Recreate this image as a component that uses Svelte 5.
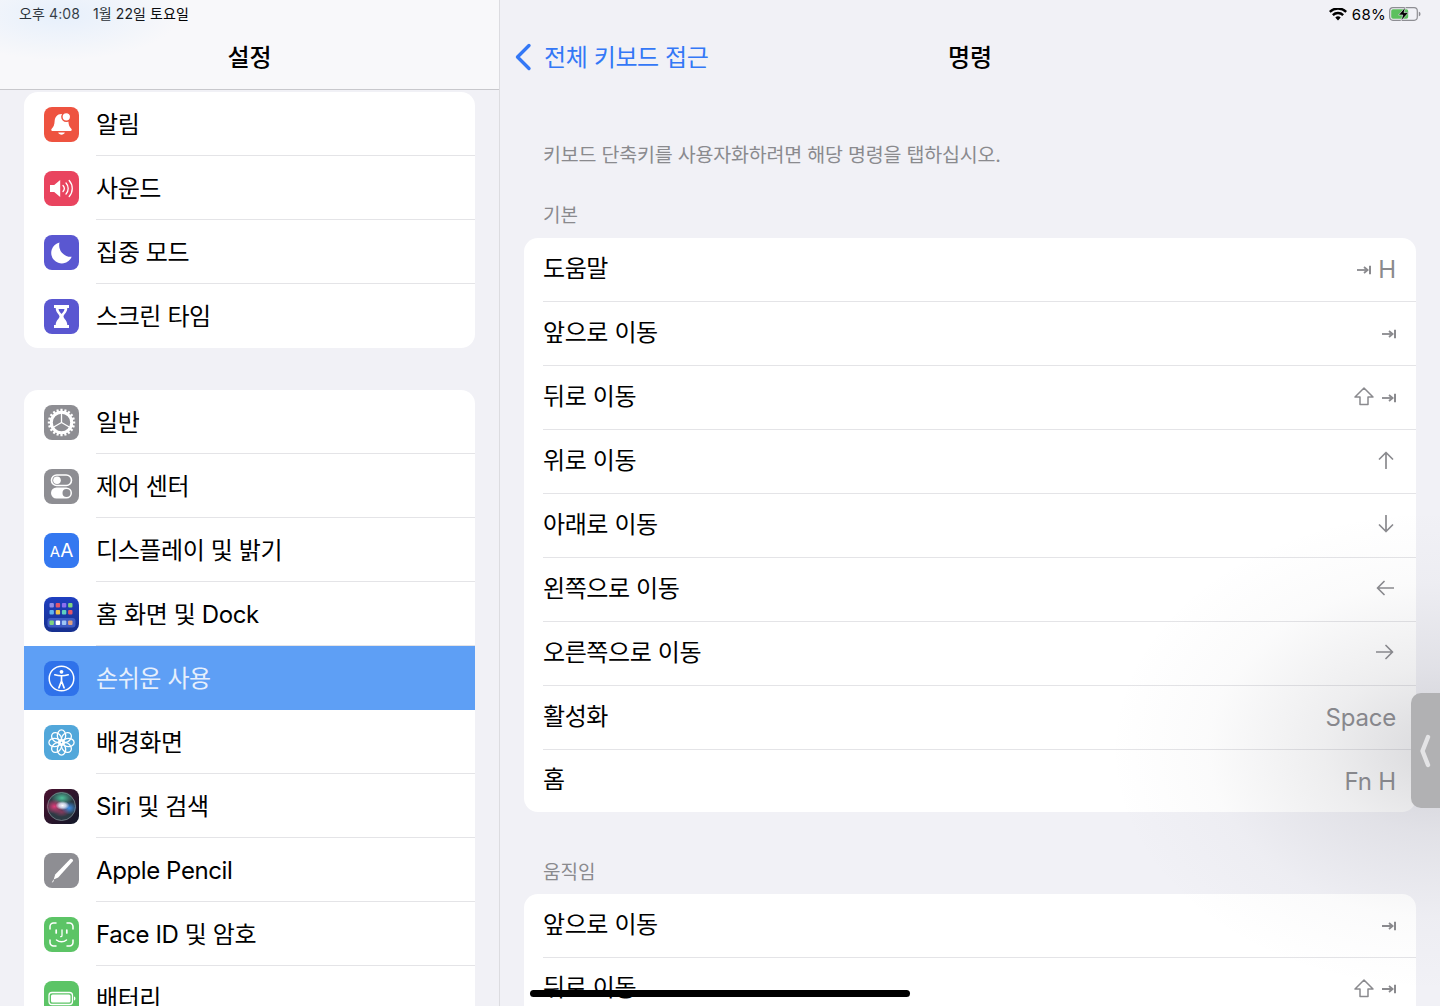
<script>
  const groupA = [
    { label: "알림", icon: "bell" },
    { label: "사운드", icon: "sound" },
    { label: "집중 모드", icon: "moon" },
    { label: "스크린 타임", icon: "hourglass" }
  ];
  const groupB = [
    { label: "일반", icon: "gear" },
    { label: "제어 센터", icon: "toggles" },
    { label: "디스플레이 및 밝기", icon: "aa" },
    { label: "홈 화면 및 Dock", icon: "home" },
    { label: "손쉬운 사용", icon: "access", active: true },
    { label: "배경화면", icon: "flower" },
    { label: "Siri 및 검색", icon: "siri" },
    { label: "Apple Pencil", icon: "pencil" },
    { label: "Face ID 및 암호", icon: "face" },
    { label: "배터리", icon: "battery" }
  ];
  const basics = [
    { label: "도움말", keys: ["tab", "H"] },
    { label: "앞으로 이동", keys: ["tab"] },
    { label: "뒤로 이동", keys: ["shift", "tab"] },
    { label: "위로 이동", keys: ["up"] },
    { label: "아래로 이동", keys: ["down"] },
    { label: "왼쪽으로 이동", keys: ["left"] },
    { label: "오른쪽으로 이동", keys: ["right"] },
    { label: "활성화", keys: ["Space"] },
    { label: "홈", keys: ["Fn H"] }
  ];
  const moves = [
    { label: "앞으로 이동", keys: ["tab"] },
    { label: "뒤로 이동", keys: ["shift", "tab"] }
  ];
  const petals = [0, 45, 90, 135, 180, 225, 270, 315];
  const gearTeeth = Array.from({ length: 20 }, (_, i) => i * 18);
  const dockDots = [
    "#8e8ee8", "#e2566a", "#8b6ff0", "#7fd37f",
    "#5fb4f0", "#f0c14b", "#5fd0c0", "#e2566a"
  ];
  const trayDots = ["#7fd37f", "#ffffff", "#9ec6f5", "#e0a080"];
</script>

{#snippet appIcon(name)}
  <span class="app-icon {name}">
    <svg viewBox="0 0 35 35" width="35" height="35">
      {#if name === "bell"}
        <path d="M17.500 7c-4.400 0-6.700 3.200-6.900 7.500-.2 3.400-1 5.400-2.900 7.300-.9.900-.4 2.200.8 2.200h18c1.200 0 1.700-1.300.8-2.200-1.900-1.900-2.700-3.900-2.900-7.300C24.200 10.200 21.900 7 17.500 7z" fill="#fff" />
        <path d="M14.200 25.600h6.600c-.5 1.300-1.800 2.100-3.300 2.100s-2.800-.8-3.300-2.100z" fill="#fff" />
        <circle cx="22.300" cy="9.800" r="4.400" fill="#fff" stroke="#ee5340" stroke-width="1.500" />
      {:else if name === "sound"}
        <path d="M6 14h4.200l6-5v17l-6-5H6z" fill="#fff" />
        <path d="M19 14.500a4.500 4.500 0 0 1 0 6M22 12a8 8 0 0 1 0 11M25.200 9.500a12 12 0 0 1 0 16" fill="none" stroke="#fff" stroke-width="1.300" stroke-linecap="round" />
      {:else if name === "moon"}
        <path d="M15.500 7.500A10.600 10.600 0 1 0 27.700 21.700 11.500 11.500 0 0 1 15.500 7.500z" fill="#fff" />
      {:else if name === "hourglass"}
        <path d="M10 6h15v3h-1.700c0 5-3.800 6.200-3.800 8.500s3.800 3.500 3.800 8.500H25v3H10v-3h1.700c0-5 3.800-6.200 3.800-8.500S11.700 14 11.700 9H10z" fill="#fff" />
        <path d="M14.500 10h6c-.4 2.500-2 3.600-3 5-1-1.400-2.600-2.500-3-5z" fill="#5a57d1" />
      {:else if name === "gear"}
        <g fill="none" stroke="#fff">
          {#each gearTeeth as a}
            <line x1="17.500" y1="3.800" x2="17.500" y2="7.500" stroke-width="2.200" transform="rotate({a} 17.500 17.500)" />
          {/each}
          <circle cx="17.500" cy="17.500" r="10.200" stroke-width="3" />
          <path d="M17.500 17.500V8M17.500 17.500 9.300 22.300M17.500 17.500l8.200 4.800" stroke-width="1.300" />
        </g>
      {:else if name === "toggles"}
        <rect x="7.500" y="6" width="20" height="10.500" rx="5.250" fill="none" stroke="#fff" stroke-width="1.600" />
        <circle cx="13" cy="11.250" r="3.800" fill="#fff" />
        <rect x="7" y="18.500" width="21" height="11" rx="5.500" fill="#fff" />
        <circle cx="22.500" cy="24" r="4" fill="#8e8e93" />
      {:else if name === "aa"}
        <text x="17.500" y="24" text-anchor="middle" class="aa-text"><tspan font-size="15">A</tspan><tspan font-size="19">A</tspan></text>
      {:else if name === "home"}
        {#each dockDots as c, i}
          <rect x={5.500 + (i % 4) * 6.200} y={i < 4 ? 6 : 13} width="4.400" height="4.400" rx="1" fill={c} />
        {/each}
        <rect x="3.500" y="21" width="28" height="9.500" rx="3" fill="#3e5cc4" />
        {#each trayDots as c, i}
          <rect x={5.500 + i * 6.200} y="23.500" width="4.400" height="4.400" rx="1" fill={c} />
        {/each}
      {:else if name === "access"}
        <circle cx="17.500" cy="17.500" r="12.300" fill="none" stroke="#fff" stroke-width="1.500" />
        <circle cx="17.500" cy="10.800" r="1.900" fill="#fff" />
        <path d="M10.800 13.800c4.500 1.300 8.900 1.300 13.400 0M17.500 15v5.500M17.500 20l-2.600 6.800M17.500 20l2.600 6.800" fill="none" stroke="#fff" stroke-width="1.700" stroke-linecap="round" />
      {:else if name === "flower"}
        {#each petals as a}
          <ellipse cx="17.500" cy="10.500" rx="4.200" ry="5.600" fill="none" stroke="#fff" stroke-width="1.300" transform="rotate({a} 17.500 17.500)" />
        {/each}
        <circle cx="17.500" cy="17.500" r="2.800" fill="none" stroke="#fff" stroke-width="1.300" />
      {:else if name === "siri"}
        <defs>
          <radialGradient id="siri-core">
            <stop offset="0" stop-color="#fff" />
            <stop offset=".5" stop-color="#e8ecff" stop-opacity=".8" />
            <stop offset="1" stop-color="#e8ecff" stop-opacity="0" />
          </radialGradient>
          <radialGradient id="siri-pink">
            <stop offset="0" stop-color="#e03a78" />
            <stop offset="1" stop-color="#e03a78" stop-opacity="0" />
          </radialGradient>
          <radialGradient id="siri-blue">
            <stop offset="0" stop-color="#3f8fe8" />
            <stop offset="1" stop-color="#3f8fe8" stop-opacity="0" />
          </radialGradient>
          <radialGradient id="siri-green">
            <stop offset="0" stop-color="#4fc09a" />
            <stop offset="1" stop-color="#4fc09a" stop-opacity="0" />
          </radialGradient>
        </defs>
        <circle cx="17.500" cy="17.500" r="14" fill="#2c3a44" stroke="#7d8a90" stroke-width=".8" />
        <ellipse cx="18" cy="9" rx="11" ry="7" fill="url(#siri-green)" />
        <ellipse cx="10.500" cy="17.500" rx="9" ry="7.500" fill="url(#siri-pink)" />
        <ellipse cx="25" cy="19" rx="8" ry="6.500" fill="url(#siri-blue)" />
        <ellipse cx="17.500" cy="23" rx="8" ry="5" fill="url(#siri-pink)" opacity=".5" />
        <ellipse cx="18.500" cy="16.500" rx="7" ry="4.500" fill="url(#siri-core)" />
      {:else if name === "pencil"}
        <path d="M26.500 5.800c1.200-.6 3 .9 2.500 2.300L14.200 24.600 9.700 26.400l1.500-4.800z" fill="#fff" />
        <path d="M9.200 27l.8-.6-.6 2.300-1.700 1.100z" fill="#fff" />
      {:else if name === "face"}
        <path d="M6 12V9.500A3.500 3.500 0 0 1 9.500 6H12M23 6h2.500A3.500 3.500 0 0 1 29 9.500V12M29 23v2.500a3.500 3.500 0 0 1-3.500 3.500H23M12 29H9.500A3.500 3.500 0 0 1 6 25.500V23" fill="none" stroke="#fff" stroke-width="1.500" stroke-linecap="round" />
        <path d="M12.200 13v3M22.800 13v3" stroke="#fff" stroke-width="1.700" stroke-linecap="round" />
        <path d="M18 13v5.500c0 .8-.5 1.200-1.300 1.200" fill="none" stroke="#fff" stroke-width="1.300" stroke-linecap="round" />
        <path d="M12.500 23c2.800 2.400 7.200 2.400 10 0" fill="none" stroke="#fff" stroke-width="1.500" stroke-linecap="round" />
      {:else if name === "battery"}
        <rect x="5" y="11.500" width="23.500" height="12" rx="3" fill="none" stroke="#fff" stroke-width="1.300" />
        <rect x="7" y="13.500" width="19.500" height="8" rx="1.500" fill="#fff" />
        <path d="M30 15.500c1 .4 1.400 1 1.400 2s-.4 1.600-1.400 2z" fill="#fff" />
      {/if}
    </svg>
  </span>
{/snippet}

{#snippet settingsRow(row)}
  <div class="s-row" class:active={row.active}>
    {@render appIcon(row.icon)}
    <div class="s-label">{row.label}</div>
  </div>
{/snippet}

{#snippet keyGlyph(k)}
  {#if k === "tab"}
    <svg class="glyph tab" viewBox="0 0 14 10" width="14" height="10">
      <path d="M0 5h10.500" fill="none" stroke="#8a8a8e" stroke-width="1.800" />
      <path d="M7 2 10.600 5 7 8" fill="none" stroke="#8a8a8e" stroke-width="1.800" />
      <path d="M13 .8v8.400" fill="none" stroke="#8a8a8e" stroke-width="2" />
    </svg>
  {:else if k === "shift"}
    <svg class="glyph shift" viewBox="0 0 20 19" width="20" height="19">
      <path d="M10 1 1 10h5v7.500h8V10h5z" fill="none" stroke="#8a8a8e" stroke-width="1.500" stroke-linejoin="round" />
    </svg>
  {:else if k === "up" || k === "down" || k === "left" || k === "right"}
    <svg class="glyph arrow {k}" viewBox="0 0 18 18" width="18" height="18">
      <path d="M9 1.500v16M2.500 8 9 1.500 15.500 8" fill="none" stroke="#8a8a8e" stroke-width="1.700" stroke-linecap="round" stroke-linejoin="round" />
    </svg>
  {:else}
    <span class="key-text">{k}</span>
  {/if}
{/snippet}

{#snippet commandRow(row)}
  <div class="c-row">
    <div class="c-inner">
      <span class="c-label">{row.label}</span>
      <span class="keys">
        {#each row.keys as k}
          {@render keyGlyph(k)}
        {/each}
      </span>
    </div>
  </div>
{/snippet}

<div class="ipad">
  <aside class="sidebar">
    <header class="side-head">
      <div class="status-left">
        <span>오후 4:08</span>
        <span>1월 22일 토요일</span>
      </div>
      <h1 class="side-title">설정</h1>
    </header>
    <div class="side-scroll">
      <section class="card first">
        {#each groupA as row}
          {@render settingsRow(row)}
        {/each}
      </section>
      <section class="card">
        {#each groupB as row}
          {@render settingsRow(row)}
        {/each}
      </section>
    </div>
  </aside>

  <main class="detail">
    <div class="status-right">
      <svg viewBox="0 0 18 13" width="18" height="13">
        <path d="M9 12.500 6.300 9.600a3.800 3.800 0 0 1 5.400 0zM4.700 8 3 6.200a8.500 8.500 0 0 1 12 0L13.300 8a6 6 0 0 0-8.600 0zM1.600 4.800 0 3a12.800 12.800 0 0 1 18 0l-1.600 1.800a10.500 10.500 0 0 0-14.800 0z" fill="#000" />
      </svg>
      <span class="pct">68%</span>
      <svg viewBox="0 0 32 14" width="32" height="14">
        <rect x=".7" y=".7" width="27.600" height="12.600" rx="3.200" fill="none" stroke="#8e8e93" stroke-width="1.200" />
        <rect x="2.200" y="2.200" width="17" height="9.600" rx="1.800" fill="#5cc05e" />
        <path d="M29.800 4.800c1.200.3 1.700 1.100 1.700 2.200s-.5 1.900-1.700 2.200z" fill="#8e8e93" />
        <path d="M16.500 0 9.500 8h4.300l-1.800 6 7.500-8.400h-4.500z" fill="#000" stroke="#f1f1f6" stroke-width=".6" />
      </svg>
    </div>
    <nav class="nav">
      <div class="back">
        <svg viewBox="0 0 18 28" width="18" height="28">
          <path d="M15 2.500 3.500 14 15 25.500" fill="none" stroke="#3478f6" stroke-width="3.400" stroke-linecap="round" stroke-linejoin="round" />
        </svg>
        <span>전체 키보드 접근</span>
      </div>
      <h2 class="detail-title">명령</h2>
    </nav>
    <p class="hint">키보드 단축키를 사용자화하려면 해당 명령을 탭하십시오.</p>
    <div class="group-label basic">기본</div>
    <section class="card cmd">
      {#each basics as row}
        {@render commandRow(row)}
      {/each}
    </section>
    <div class="group-label move">움직임</div>
    <section class="card cmd">
      {#each moves as row}
        {@render commandRow(row)}
      {/each}
    </section>
  </main>

  <div class="shade"></div>
  <div class="glow"></div>
  <div class="handle">
    <svg viewBox="0 0 12 34" width="12" height="34">
      <path d="M9 3 3.500 17 9 31" fill="none" stroke="#e4e4e6" stroke-width="4.400" stroke-linecap="round" stroke-linejoin="round" />
    </svg>
  </div>
  <div class="home-indicator"></div>
</div>

<style>
  :global(body) {
    margin: 0;
    background: #f1f1f6;
  }
  .ipad {
    position: relative;
    display: flex;
    width: 1440px;
    height: 1006px;
    overflow: hidden;
    background: #f1f1f6;
    color: #000;
    font-family: "Inter", "Noto Sans CJK KR", sans-serif;
  }

  /* 左カラム */
  .sidebar {
    width: 499px;
    flex: none;
    border-right: 1px solid #dcdce0;
  }
  .side-head {
    height: 89px;
    border-bottom: 1px solid #c8c8cc;
    background: #f8f8fa;
    display: flex;
    flex-direction: column;
    align-items: center;
  }
  .status-left {
    align-self: flex-start;
    display: flex;
    gap: 13px;
    padding: 5px 0 0 19px;
    font-size: 14px;
    line-height: 18px;
    letter-spacing: .1px;
  }
  .side-title {
    margin: 17px 0 0;
    font-size: 24px;
    line-height: 36px;
    font-weight: 500;
  }
  .side-scroll {
    display: flex;
    flex-direction: column;
    gap: 42px;
    padding: 2px 24px 0 24px;
  }
  .card {
    background: #fff;
    border-radius: 14px;
    overflow: hidden;
  }
  .s-row {
    display: flex;
    align-items: center;
    height: 64px;
    padding-left: 20px;
  }
  .app-icon {
    flex: none;
    display: block;
    width: 35px;
    height: 35px;
    border-radius: 8px;
    margin-right: 17px;
  }
  .app-icon svg {
    display: block;
  }
  .s-label {
    flex: 1;
    height: 64px;
    line-height: 65px;
    font-size: 24px;
    letter-spacing: -.4px;
    border-bottom: 1px solid #e4e4e7;
    box-sizing: border-box;
  }
  .s-row:last-child .s-label {
    border-bottom: 0;
  }
  .s-row.active {
    background: #5e9ff5;
  }
  .s-row.active .s-label {
    color: #e6effc;
    border-bottom: 0;
  }
  .bell { background: #ee5340; }
  .sound { background: #e9445f; }
  .moon, .hourglass { background: #5a57d1; }
  .gear, .toggles, .pencil { background: #8e8e93; }
  .aa { background: #3478f0; }
  .home { background: linear-gradient(#1f3fc0, #16308f); }
  .access { background: #2f72ea; }
  .flower { background: #52a7da; }
  .siri { background: linear-gradient(135deg, #4a1230, #101828); }
  .face, .battery { background: #5cc466; }
  .aa-text {
    fill: #fff;
    font-family: "Inter", sans-serif;
  }

  /* 右カラム */
  .detail {
    flex: 1;
    min-width: 0;
    padding: 0 24px;
  }
  .status-right {
    display: flex;
    justify-content: flex-end;
    align-items: center;
    gap: 3px;
    height: 26px;
    padding-top: 2px;
    box-sizing: border-box;
    margin-right: -5px;
    font-size: 15px;
  }
  .pct {
    letter-spacing: .3px;
    margin-left: 2px;
  }
  .nav {
    position: relative;
    display: flex;
    justify-content: center;
    align-items: center;
    height: 58px;
    margin-left: -8px;
  }
  .back {
    position: absolute;
    left: -2px;
    top: 0;
    height: 58px;
    display: flex;
    align-items: center;
    gap: 12px;
    color: #3478f6;
    font-size: 24px;
    letter-spacing: -.4px;
  }
  .back svg {
    margin-top: 4px;
  }
  .detail-title {
    margin: 0 0 0 8px;
    font-size: 24px;
    font-weight: 500;
  }
  .hint {
    margin: 0;
    padding: 56px 0 0 19px;
    font-size: 19.500px;
    line-height: 30px;
    letter-spacing: -.2px;
    color: #8a8a8e;
  }
  .group-label {
    padding-left: 19px;
    font-size: 19px;
    line-height: 28px;
    color: #8a8a8e;
  }
  .group-label.basic {
    margin-top: 32px;
    margin-bottom: 8px;
  }
  .group-label.move {
    margin-top: 47px;
    margin-bottom: 7px;
  }
  .c-row {
    height: 64px;
    padding-left: 19px;
  }
  .c-row:last-child {
    height: 62px;
  }
  .c-inner {
    height: 64px;
    box-sizing: border-box;
    display: flex;
    align-items: center;
    justify-content: space-between;
    padding-right: 20px;
    border-bottom: 1px solid #e4e4e7;
  }
  .c-row:last-child .c-inner {
    height: 62px;
    border-bottom: 0;
  }
  .c-label {
    font-size: 24px;
    letter-spacing: -.4px;
    padding-bottom: 7px;
  }
  .keys {
    display: flex;
    align-items: center;
    gap: 7px;
  }
  .key-text {
    font-size: 24px;
    letter-spacing: -.2px;
    color: #8a8a8e;
  }
  .glyph {
    display: block;
    flex: none;
  }
  .glyph.shift {
    margin-right: 1px;
    margin-bottom: 2px;
  }
  .arrow {
    margin-right: 1px;
    margin-bottom: 3px;
  }
  .arrow.down { transform: rotate(180deg); }
  .arrow.left { transform: rotate(-90deg); margin-right: 2px; }
  .arrow.right { transform: rotate(90deg); margin-right: 2px; }

  /* 画面の上に載るもの */
  .shade {
    position: absolute;
    inset: 0;
    pointer-events: none;
    background: radial-gradient(ellipse 330px 240px at 1440px 750px, rgba(120, 120, 130, .28), rgba(120, 120, 130, .13) 35%, rgba(120, 120, 130, .03) 70%, rgba(120, 120, 130, 0));
  }
  .glow {
    position: absolute;
    left: 0;
    top: 0;
    width: 300px;
    height: 80px;
    pointer-events: none;
    background: radial-gradient(ellipse 120px 45px at 60px 15px, rgba(190, 220, 255, .3), rgba(190, 220, 255, 0));
  }
  .handle {
    position: absolute;
    left: 1411px;
    top: 693px;
    width: 29px;
    height: 115px;
    display: flex;
    align-items: center;
    padding-left: 8px;
    box-sizing: border-box;
    border-radius: 10px 0 0 10px;
    background: #b1b1b3;
  }
  .home-indicator {
    position: absolute;
    left: 530px;
    top: 990px;
    width: 380px;
    height: 7px;
    border-radius: 4px;
    background: #000;
  }
</style>
